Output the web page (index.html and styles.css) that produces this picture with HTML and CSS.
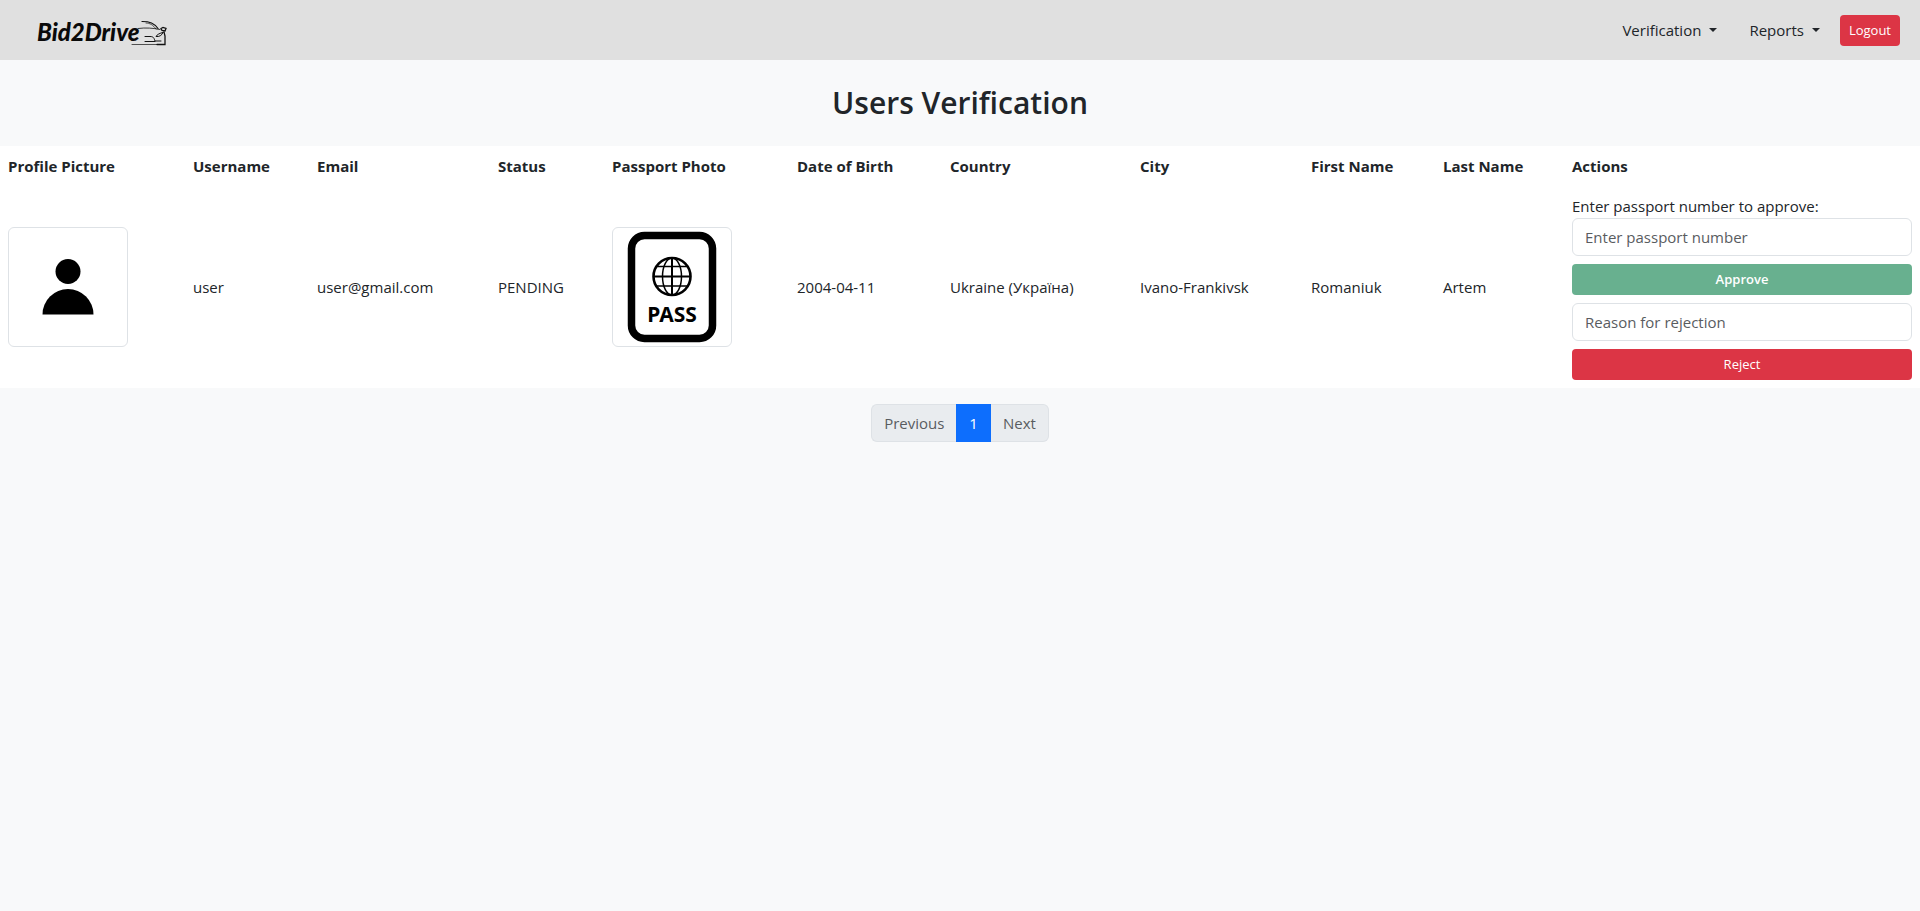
FILE: index.html
```html
<!DOCTYPE html>
<html lang="en">
<head>
<meta charset="utf-8">
<title>Users Verification</title>
<link rel="stylesheet" href="styles.css">
</head>
<body>
<header class="navbar">
  <a class="brand" href="#" aria-label="Bid2Drive">
    <svg class="brand-logo" width="136" height="30" viewBox="32 15 136 30">
      <text class="brand-text" x="37" y="41">Bid2Drive</text>
      <g fill="none" stroke="#111" stroke-linecap="round">
        <path stroke-width="1.2" d="M142 21.500C150 21.500 154 23 158 28.500"/>
        <path stroke-width=".7" d="M146 23C150 23 153 25 156 29"/>
        <path stroke-width=".8" d="M138 28.500C146 27.500 153 28 160 29.500"/>
        <path stroke-width="1.300" d="M161 28.500l2-1 3 1-1 2.500-3-.5z"/>
        <path stroke-width="1" d="M163 32.500c-3 .5-6 2-7 4 3 .5 6-1 7-4zM145 36.500h5c4 0 4 2 5 4.500h6M145 41.500h10"/>
        <path stroke-width="1.300" d="M164 32l1 4v8.500h-8"/>
        <path stroke-width=".7" d="M132 44.500h25"/>
      </g>
    </svg>
  </a>
  <nav class="nav">
    <div class="nav-links">
      <button class="nav-link" type="button">Verification</button>
      <button class="nav-link" type="button">Reports</button>
    </div>
    <button class="btn btn-danger" type="button">Logout</button>
  </nav>
</header>
<main>
  <h1 class="title">Users Verification</h1>
  <table class="users">
    <colgroup>
      <col class="c-photo"><col class="c-username"><col class="c-email"><col class="c-status"><col class="c-photo"><col class="c-birth"><col class="c-country"><col class="c-city"><col class="c-first"><col class="c-last"><col class="c-actions">
    </colgroup>
    <thead>
      <tr><th>Profile Picture</th><th>Username</th><th>Email</th><th>Status</th><th>Passport Photo</th><th>Date of Birth</th><th>Country</th><th>City</th><th>First Name</th><th>Last Name</th><th>Actions</th></tr>
    </thead>
    <tbody>
      <tr>
        <td>
          <svg class="thumb" viewBox="1 1 118 118" role="img" aria-label="Profile picture">
            <circle cx="60" cy="44.500" r="12.500"/>
            <path d="M34.500 87.500a25.500 25.500 0 0 1 51 0z"/>
          </svg>
        </td>
        <td>user</td>
        <td>user@gmail.com</td>
        <td>PENDING</td>
        <td>
          <svg class="thumb" viewBox="1 1 118 118" role="img" aria-label="Passport photo">
            <rect x="19.500" y="8.500" width="81" height="103" rx="13" fill="none" stroke="#000" stroke-width="7.500"/>
            <g fill="none" stroke="#000" stroke-width="1.500">
              <circle cx="60" cy="49.500" r="18.500" stroke-width="2.600"/>
              <ellipse cx="60" cy="49.500" rx="9.500" ry="18.500"/>
              <path stroke-width="2" d="M60 31v37M41.500 49.500h37"/>
              <path d="M45 39.500h30M45 59h30"/>
            </g>
            <text class="pass-text" x="60" y="95" text-anchor="middle">PASS</text>
          </svg>
        </td>
        <td>2004-04-11</td>
        <td>Ukraine (Україна)</td>
        <td>Ivano-Frankivsk</td>
        <td>Romaniuk</td>
        <td>Artem</td>
        <td>
          <form class="actions">
            <div class="field">
              <label for="passport">Enter passport number to approve:</label>
              <input class="input" id="passport" type="text" placeholder="Enter passport number">
            </div>
            <button class="btn btn-success" type="button" disabled>Approve</button>
            <input class="input" type="text" placeholder="Reason for rejection" aria-label="Reason for rejection">
            <button class="btn btn-danger" type="button">Reject</button>
          </form>
        </td>
      </tr>
    </tbody>
  </table>
  <nav class="pagination" aria-label="Pages">
    <a class="page" href="#">Previous</a>
    <a class="page page-active" href="#">1</a>
    <a class="page" href="#">Next</a>
  </nav>
</main>
</body>
</html>
```
FILE: styles.css
```css
*, *::before, *::after { box-sizing: border-box; }

body {
  margin: 0;
  background: #f8f9fa;
  color: #212529;
  font-family: "Open Sans", "Noto Sans", sans-serif;
  font-size: 15px;
  line-height: 24px;
}

button, input { font: inherit; }

.navbar {
  display: flex;
  align-items: center;
  justify-content: space-between;
  height: 60px;
  padding: 0 20px 0 32px;
  background: #e0e0e0;
}

.brand { display: flex; }
.brand-logo { overflow: visible; }
.brand-text {
  font: italic 900 24px Lato, sans-serif;
  fill: #0a0a0a;
}

.nav {
  display: flex;
  align-items: center;
  gap: 12px;
}
.nav-links {
  display: flex;
  gap: 16px;
}

.nav-link {
  display: flex;
  align-items: center;
  gap: 8px;
  padding: 8px;
  border: 0;
  background: none;
  color: #212529;
}
.nav-link::after {
  content: "";
  border: 4px solid transparent;
  border-top-color: currentColor;
  border-bottom: 0;
}

.btn {
  padding: 4px 8px;
  border: 1px solid transparent;
  border-radius: 4px;
  color: #fff;
  font-size: 13px;
  font-weight: 500;
  line-height: 21px;
}
.btn-danger { background: #dc3545; }
.btn-success { background: #198754; font-weight: 600; }
.btn:disabled { opacity: .65; }

.title {
  margin: 24px 0;
  font-size: 30px;
  font-weight: 600;
  line-height: 38px;
  text-align: center;
}

.users {
  width: 100%;
  table-layout: fixed;
  border-collapse: collapse;
  background: #fff;
}
.users th, .users td {
  padding: 8px;
  text-align: left;
  vertical-align: middle;
}
.users th { font-weight: 700; }

.c-photo { width: 185px; }
.c-username { width: 124px; }
.c-email { width: 181px; }
.c-status { width: 114px; }
.c-birth { width: 153px; }
.c-country { width: 190px; }
.c-city { width: 171px; }
.c-first { width: 132px; }
.c-last { width: 129px; }
.c-actions { width: 356px; }

.thumb {
  display: block;
  width: 120px;
  height: 120px;
  border: 1px solid #dee2e6;
  border-radius: 6px;
}
.pass-text { font: 700 21px "Noto Sans", sans-serif; }

.actions {
  display: flex;
  flex-direction: column;
  gap: 8px;
}
.field {
  display: flex;
  flex-direction: column;
}
.input {
  width: 100%;
  padding: 6px 12px;
  border: 1px solid #dee2e6;
  border-radius: 6px;
  background: #fff;
  color: #212529;
}
.input::placeholder { color: #595c5f; opacity: 1; }

.pagination {
  display: flex;
  justify-content: center;
  margin: 16px 0;
}
.page {
  padding: 6px 12px;
  border: 1px solid #dee2e6;
  background: #e9ecef;
  color: #595c5f;
  text-decoration: none;
}
.page:first-child {
  border-right: 0;
  border-radius: 6px 0 0 6px;
}
.page:last-child {
  border-left: 0;
  border-radius: 0 6px 6px 0;
}
.page-active {
  border-color: #0d6efd;
  background: #0d6efd;
  color: #fff;
}
```
